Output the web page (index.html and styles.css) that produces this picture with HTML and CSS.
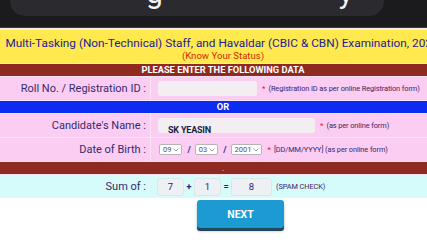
FILE: index.html
```html
<!DOCTYPE html>
<html>
<head>
<meta charset="utf-8">
<link rel="stylesheet" href="styles.css">
</head>
<body>
<div class="page">
  <div class="topbar">
    <div class="pill"><span class="frag frag-g">g</span><span class="frag frag-y">y</span></div>
  </div>
  <div class="header">
    <div class="title">Multi-Tasking (Non-Technical) Staff, and Havaldar (CBIC &amp; CBN) Examination, 2024</div>
    <div class="status">(Know Your Status)</div>
  </div>
  <div class="form">
    <div class="band red">PLEASE ENTER THE FOLLOWING DATA</div>
    <div class="row pink">
      <div class="label">Roll No. / Registration ID :</div>
      <div class="field"><span class="input w100"></span><span class="star">*</span><span class="hint">(Registration ID as per online Registration form)</span></div>
    </div>
    <div class="band blue">OR</div>
    <div class="row pink">
      <div class="label">Candidate's Name :</div>
      <div class="field"><span class="input w158"><span class="val">SK YEASIN</span></span><span class="star">*</span><span class="hint">(as per online form)</span></div>
    </div>
    <div class="row pink">
      <div class="label">Date of Birth :</div>
      <div class="field dob">
        <span class="sel">09<svg class="chev" viewBox="0 0 6 4" width="6" height="4"><polyline points="0.5,0.5 3,3 5.5,0.5" fill="none" stroke="#888" stroke-width="0.8"/></svg></span>
        <span class="slash">/</span>
        <span class="sel">03<svg class="chev" viewBox="0 0 6 4" width="6" height="4"><polyline points="0.5,0.5 3,3 5.5,0.5" fill="none" stroke="#888" stroke-width="0.8"/></svg></span>
        <span class="slash">/</span>
        <span class="sel">2001<svg class="chev" viewBox="0 0 6 4" width="6" height="4"><polyline points="0.5,0.5 3,3 5.5,0.5" fill="none" stroke="#888" stroke-width="0.8"/></svg></span>
        <span class="star">*</span><span class="hint">[DD/MM/YYYY] (as per online form)</span>
      </div>
    </div>
    <div class="band red tall"><span class="dot">.</span></div>
    <div class="row cyan">
      <div class="label">Sum of :</div>
      <div class="field sum">
        <span class="box b27">7</span><span class="op">+</span><span class="box b27">1</span><span class="op">=</span><span class="box b41">8</span><span class="hint spam">(SPAM CHECK)</span>
      </div>
    </div>
  </div>
  <div class="actions"><button class="next">NEXT</button></div>
</div>
</body>
</html>
```
FILE: styles.css
```css
html, body { margin: 0; padding: 0; }
body { background: #fff; overflow: hidden; width: 427px; height: 240px; font-family: Roboto, "Liberation Sans", sans-serif; }
.page { width: 446px; }

.topbar { height: 27px; background: #1b1b1d; border-bottom: 1px solid #3a3a3c; }
.pill { margin: 0 62px 0 10px; height: 16px; background: #2b2b2f; border-radius: 0 0 15px 15px; overflow: hidden; display: flex; align-items: flex-end; }
.frag { color: #f4f4f4; font-size: 30px; line-height: 30px; height: 30px; margin-bottom: 8px; font-family: Roboto, sans-serif; }
.frag-g { margin-left: 136px; }
.frag-y { margin-left: 176px; }

.header { background: #ffe94f; border-top: 2px solid #f2efe4; text-align: center; height: 36px; box-sizing: border-box; padding-top: 6px; border-bottom: 1px solid #f7ecc0; }
.title { color: #1c1c98; font-size: 11.8px; line-height: 14px; white-space: nowrap; margin-left: -2px; }
.status { color: #d3290c; font-size: 9.6px; line-height: 12px; }

.form { display: flex; flex-direction: column; gap: 1px; background: #f7e3f2; }
.band { height: 12px; color: #fff; font-weight: 700; font-size: 9.3px; line-height: 12px; text-align: center; }
.band.red { background: #8f2a20; }
.band.blue { background: #0c2cf2; }
.band.tall { height: 12px; }
.dot { color: #e6b1a4; font-size: 7px; line-height: 10px; }

.row { display: grid; grid-template-columns: 150px 1fr; column-gap: 1px; height: 23px; }
.row.cyan { background: #ddf7f7; height: 22px; }
.row.pink > div { background: #fbcdf3; }
.row.cyan > div { background: #d6fbfb; }
.label { text-align: right; padding-right: 4px; font-size: 11px; line-height: 23px; color: #36296c; }
.field { display: flex; align-items: center; padding-left: 7px; }

.input { display: inline-block; height: 15px; background: #f2eef1; border-radius: 3px; box-sizing: border-box; padding-left: 10px; }
.w100 { width: 99px; }
.w158 { width: 157px; }
.val { font-size: 9px; font-weight: 700; line-height: 15px; color: #1f1d45; letter-spacing: -0.2px; }
.star { color: #e02020; font-size: 8px; margin-left: 5px; margin-right: 3px; line-height: 8px; }
.hint { color: #3a1f66; font-size: 7.4px; letter-spacing: -0.1px; }

.dob { padding-left: 8px; }
.sel { display: inline-flex; align-items: center; gap: 2px; height: 11px; box-sizing: border-box; border: 1px solid #b8b3b8; border-radius: 2px; background: #fff; font-size: 7.5px; color: #555; padding: 0 2px 0 3px; }
.chev { display: block; }
.slash { color: #2a2a6a; font-size: 9px; font-weight: 700; margin: 0 4px 0 5px; }

.sum { padding-left: 6px; }
.box { display: inline-flex; justify-content: center; align-items: center; height: 18px; box-sizing: border-box; background: #eef1f3; border: 1px solid #dfe4e8; border-radius: 3px; color: #26237f; font-size: 9.5px; }
.b27 { width: 27px; }
.b41 { width: 41px; }
.op { color: #26237f; font-weight: 700; font-size: 9px; width: 10px; text-align: center; }
.spam { margin-left: 4px; }

.actions { padding: 3px 0 0 197px; }
.next { width: 87px; height: 28px; border: 0; border-radius: 3px; background: #1b9bd2; color: #fff; font-family: Roboto, sans-serif; font-weight: 700; font-size: 10.5px; box-shadow: 0 3px 0 #22465a, 0 3px 3px rgba(0,0,0,0.3); padding: 0; }
```
